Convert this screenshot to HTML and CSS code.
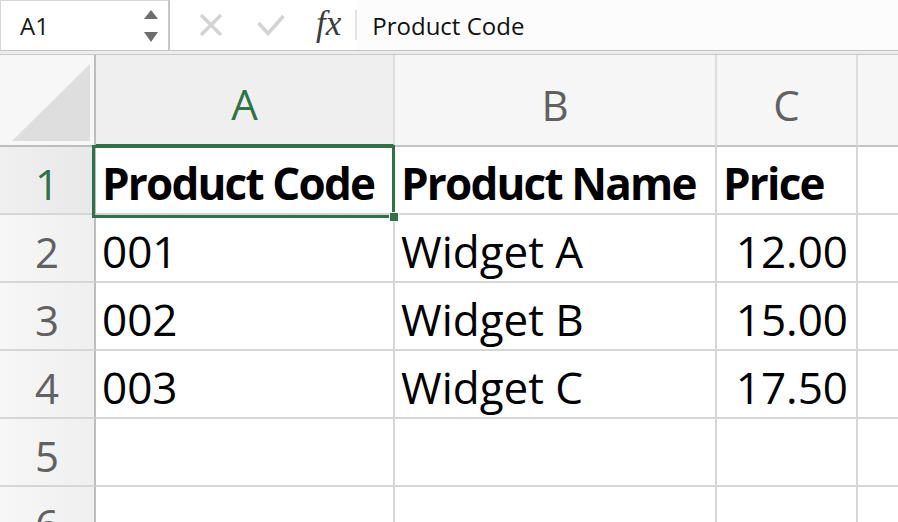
FILE: index.html
```html
<!DOCTYPE html>
<html lang="en">
<head>
    <meta charset="UTF-8"/>
    <title>Sheet1</title>
    <link rel="stylesheet" href="styles.css">
</head>
<body>
<div class="formula-bar">
    <div class="name-box">
        <span class="name-text">A1</span>
        <svg class="spin" width="16" height="34" viewBox="0 0 16 34">
            <path d="M1 10 L8 1 L15 10 Z" fill="#6e6e6e"/>
            <path d="M1 23 L15 23 L8 33 Z" fill="#6e6e6e"/>
        </svg>
    </div>
    <div class="fb-tools">
        <svg class="tool-x" width="24" height="22" viewBox="0 0 24 22">
            <path d="M2 1 L22 21 M22 1 L2 21" stroke="#d3d3d3" stroke-width="3.4"/>
        </svg>
        <svg class="tool-ok" width="28" height="22" viewBox="0 0 28 22">
            <path d="M1.5 9 L11 19.5 L26.5 2" stroke="#d3d3d3" stroke-width="3.6" fill="none"/>
        </svg>
        <span class="tool-fx">fx</span>
    </div>
    <div class="fb-sep"></div>
    <div class="fb-input">Product Code</div>
</div>
<div class="fb-gap"></div>

<div class="sheet">
    <div class="corner">
        <svg width="78" height="77" viewBox="0 0 78 77">
            <path d="M0 77 L78 0 L78 77 Z" fill="#dedede"/>
        </svg>
    </div>
    <div class="col-head active">A</div>
    <div class="col-head">B</div>
    <div class="col-head">C</div>
    <div class="col-head last"></div>

    <div class="row-head active">1</div>
    <div class="cell bold">Product Code</div>
    <div class="cell bold">Product Name</div>
    <div class="cell bold">Price</div>
    <div class="cell last"></div>

    <div class="row-head">2</div>
    <div class="cell">001</div>
    <div class="cell">Widget A</div>
    <div class="cell num">12.00</div>
    <div class="cell last"></div>

    <div class="row-head">3</div>
    <div class="cell">002</div>
    <div class="cell">Widget B</div>
    <div class="cell num">15.00</div>
    <div class="cell last"></div>

    <div class="row-head">4</div>
    <div class="cell">003</div>
    <div class="cell">Widget C</div>
    <div class="cell num">17.50</div>
    <div class="cell last"></div>

    <div class="row-head">5</div>
    <div class="cell"></div>
    <div class="cell"></div>
    <div class="cell"></div>
    <div class="cell last"></div>

    <div class="row-head">6</div>
    <div class="cell"></div>
    <div class="cell"></div>
    <div class="cell"></div>
    <div class="cell last"></div>

    <div class="selection"><span class="fill-handle"></span></div>
</div>
</body>
</html>
```

FILE: styles.css
```css
* {
    margin: 0;
    padding: 0;
    box-sizing: border-box;
}

html, body {
    width: 898px;
    height: 522px;
    overflow: hidden;
    background: #fff;
    font-family: "Open Sans", "Noto Sans", sans-serif;
}

/* formula bar */

.formula-bar {
    display: flex;
    align-items: center;
    height: 51px;
    border-bottom: 1px solid #c4c4c4;
}

.name-box {
    display: flex;
    align-items: center;
    justify-content: space-between;
    width: 170px;
    height: 100%;
    padding: 0 9px 0 19px;
    border-top: 1px solid #d6d6d6;
    border-left: 1px solid #d6d6d6;
    border-right: 2px solid #c6c6c6;
}

.name-text {
    font-size: 24px;
    color: #1a1a1a;
}

.spin {
    margin-top: 1px;
}

.fb-tools {
    display: flex;
    align-items: center;
    padding-left: 29px;
}

.tool-ok {
    margin-left: 34px;
}

.tool-fx {
    margin-left: 31px;
    font-family: "Liberation Serif", "DejaVu Serif", serif;
    font-style: italic;
    font-size: 35px;
    color: #3c3c3c;
    line-height: 1;
    margin-top: -4px;
}

.fb-sep {
    width: 2px;
    height: 30px;
    margin-left: 14px;
    background: #e2e2e2;
}

.fb-input {
    flex: 1;
    height: 100%;
    display: flex;
    align-items: center;
    padding: 1px 0 0 15px;
    font-size: 24px;
    color: #111;
    background: #fcfcfc;
}

.fb-gap {
    height: 4px;
    background: #ededed;
    border-bottom: 1px solid #c9c9c9;
}

/* grid */

.sheet {
    position: relative;
    display: grid;
    grid-template-columns: 96px 299px 322px 141px 1fr;
    grid-template-rows: 92px repeat(6, 68px);
}

.corner {
    display: flex;
    align-items: flex-end;
    justify-content: flex-end;
    padding: 0 4px 4px 0;
    background: #f7f7f7;
    border-right: 2px solid #bdbdbd;
    border-bottom: 2px solid #bdbdbd;
}

.col-head {
    display: flex;
    align-items: center;
    justify-content: center;
    padding-top: 8px;
    font-size: 42px;
    color: #616161;
    background: #f6f6f6;
    border-right: 2px solid #dcdcdc;
    border-bottom: 2px solid #c4c4c4;
}

.col-head.active {
    color: #2f7245;
    background: #efefef;
    border-bottom: 3px solid #2f7245;
}

.col-head.last {
    border-right: none;
}

.row-head {
    display: flex;
    align-items: center;
    justify-content: center;
    padding-top: 6px;
    font-size: 42px;
    color: #616161;
    background: linear-gradient(to right, #f7f7f7, #efefef);
    border-right: 2px solid #bdbdbd;
    border-bottom: 2px solid #d6d6d6;
}

.row-head.active {
    color: #2f7245;
    background: linear-gradient(to right, #f0f0f0, #e8e8e8);
}

.cell {
    padding: 4px 8px 0 6px;
    font-size: 44px;
    line-height: 64px;
    color: #000;
    white-space: nowrap;
    overflow: hidden;
    border-right: 2px solid #d6d6d6;
    border-bottom: 2px solid #d6d6d6;
}

.cell.bold {
    font-weight: 700;
    letter-spacing: -1.8px;
}

.cell.num {
    text-align: right;
}

.cell.last {
    border-right: none;
}

/* active cell outline */

.selection {
    position: absolute;
    left: 92px;
    top: 90px;
    width: 303px;
    height: 73px;
    border: 3px solid #2f7245;
}

.fill-handle {
    position: absolute;
    right: -7px;
    bottom: -7px;
    width: 10px;
    height: 10px;
    background: #2f7245;
    border: 1px solid #fff;
}
```
